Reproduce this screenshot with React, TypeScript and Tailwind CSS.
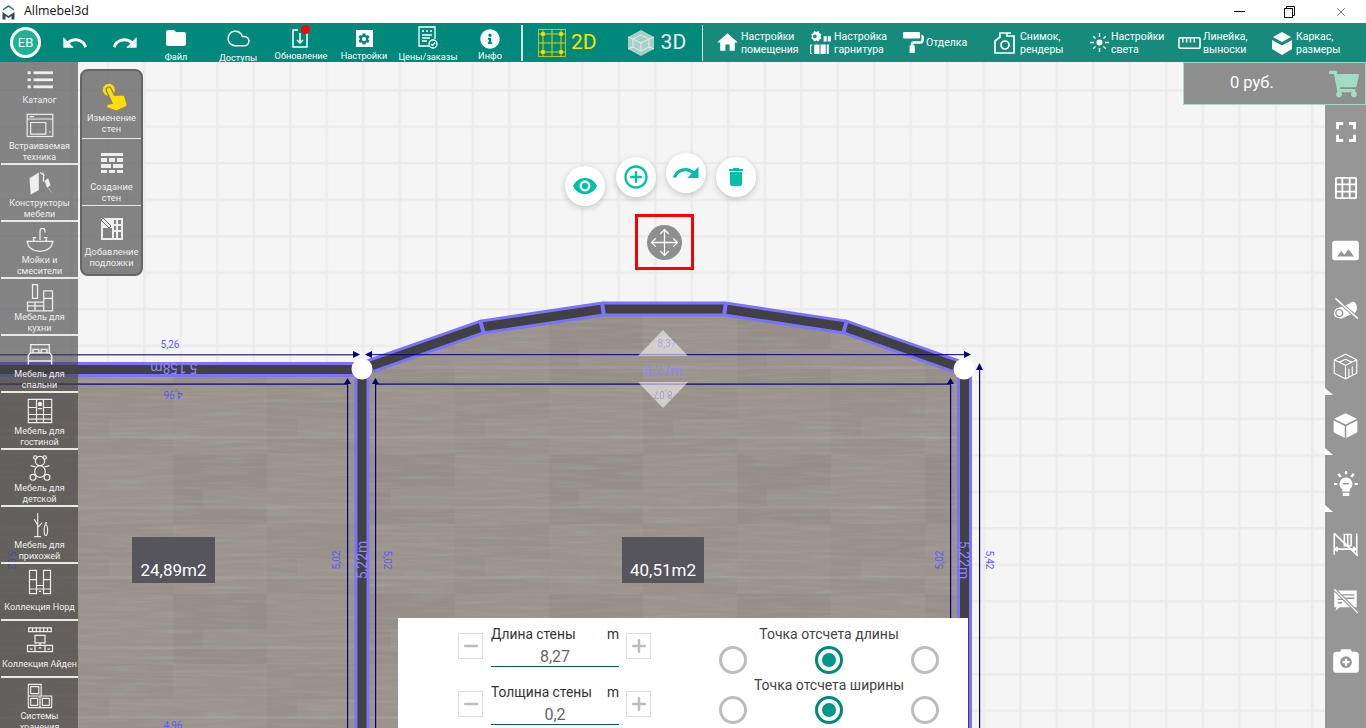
import React from "react";
import { FaInfoCircle, FaPaintRoller, FaShoppingCart } from "react-icons/fa";
import {
	MdAddCircleOutline,
	MdDelete,
	MdFolder,
	MdFullscreen,
	MdHome,
	MdPanorama,
	MdRedo,
	MdSettings,
	MdTouchApp,
	MdUndo,
	MdVisibility,
} from "react-icons/md";
import { Cloud, Minus, Move, Plus, X } from "lucide-react";

type IconProps = { children: React.ReactNode; size?: number; box?: string; sw?: number };

function Line({ children, size = 26, box = "0 0 24 24", sw = 1 }: IconProps) {
	return (
		<svg width={size} height={size} viewBox={box} fill="none" stroke="currentColor" strokeWidth={sw}>
			{children}
		</svg>
	);
}

function Solid({ children, size = 26, box = "0 0 24 24" }: IconProps) {
	return (
		<svg width={size} height={size} viewBox={box} fill="currentColor">
			{children}
		</svg>
	);
}

function ToolButton({ icon, label }: { icon: React.ReactNode; label: string }) {
	return (
		<div className="flex h-full w-[62px] shrink-0 flex-col items-center text-white">
			<div className="flex h-[26px] items-end justify-center pb-[1px]">{icon}</div>
			<span className="whitespace-nowrap text-[9.2px] leading-[12px]">{label}</span>
		</div>
	);
}

function SettingButton({
	icon,
	lines,
	className,
}: {
	icon: React.ReactNode;
	lines: string[];
	className: string;
}) {
	return (
		<div className={`flex shrink-0 items-center text-white ${className}`}>
			{icon}
			<div className="whitespace-nowrap text-[10.5px] leading-[13px]">
				{lines.map((l) => (
					<div key={l}>{l}</div>
				))}
			</div>
		</div>
	);
}

const catalogItems: { label: string[]; single?: boolean; h?: string; noLine?: boolean; icon: React.ReactNode }[] = [
	{
		label: ["Каталог"],
		h: "h-[46px]",
		noLine: true,
		icon: (
			<Solid size={26}>
				<rect x="0.5" y="4" width="3" height="2.6" />
				<rect x="0.5" y="10.5" width="3" height="2.6" />
				<rect x="0.5" y="17" width="3" height="2.6" />
				<rect x="6" y="4" width="18" height="2.6" />
				<rect x="6" y="10.5" width="18" height="2.6" />
				<rect x="6" y="17" width="18" height="2.6" />
			</Solid>
		),
	},
	{
		label: ["Встраиваемая", "техника"],
		icon: (
			<Line size={28}>
				<rect x="1" y="2" width="22" height="19" />
				<path d="M1 6h22M3 4h4M4 9h13v10H4zM20 17h1" />
			</Line>
		),
	},
	{
		label: ["Конструкторы", "мебели"],
		icon: (
			<Solid size={28}>
				<path d="M3 8l8-5v15l-7 4z" />
				<path d="M12 3l3 2v6" fill="none" stroke="currentColor" />
				<path d="M16 10l3-2 2 6-3 2z" />
				<path d="M14 2l2 4M19 16l3 4" fill="none" stroke="currentColor" strokeWidth="0.5" />
			</Solid>
		),
	},
	{
		label: ["Мойки и", "смесители"],
		icon: (
			<Line size={30}>
				<path d="M2 13h20c0 5-4 8-10 8S2 18 2 13zM1 13h22M12 12V5c0-3 4-3 4 0v1M6 10h3M15 10h3M7 10v3M17 10v3" />
			</Line>
		),
	},
	{
		label: ["Мебель для", "кухни"],
		icon: (
			<Line size={30}>
				<path d="M6 2h4v11H6zM15 7h7v16h-7zM15 13h7M2 16h13v7H2zM2 19h13M8 16v7" />
			</Line>
		),
	},
	{
		label: ["Мебель для", "спальни"],
		icon: (
			<Line size={28} sw={1.2}>
				<path d="M4 11V4h16v7M2 18v-5l2-2h16l2 2v5zM2 18v3M22 18v3M6 11V8h5v3M13 11V8h5v3" />
			</Line>
		),
	},
	{
		label: ["Мебель для", "гостиной"],
		icon: (
			<Line size={28}>
				<path d="M2 2h20v20H2zM9 2v20M15 2v20M2 9h7M15 9h7M2 15h20M2 19h20M10 10h4" />
				<circle cx="12" cy="6" r="1.5" fill="currentColor" />
			</Line>
		),
	},
	{
		label: ["Мебель для", "детской"],
		icon: (
			<Line size={28}>
				<circle cx="12" cy="6" r="4" />
				<circle cx="8" cy="3" r="1.5" />
				<circle cx="16" cy="3" r="1.5" />
				<ellipse cx="12" cy="15" rx="4.5" ry="5" />
				<circle cx="6" cy="20" r="2.5" />
				<circle cx="18" cy="20" r="2.5" />
				<path d="M8 11l-4-1M16 11l4-1" />
			</Line>
		),
	},
	{
		label: ["Мебель для", "прихожей"],
		icon: (
			<Line size={28}>
				<path d="M10 2v20M7 22h6M7 7l3 5M10 14l4-4M17 12c-2 0-2 9 0 9s2-9 0-9zM17 12v-2h1" />
			</Line>
		),
	},
	{
		label: ["Коллекция Норд"],
		single: true,
		icon: (
			<Line size={28}>
				<path d="M3 2h6v20H3zM15 2h6v20h-6zM9 15h6M9 18h6M3 10h6M15 10h6M3 18h6M15 18h6M11 20h2" />
			</Line>
		),
	},
	{
		label: ["Коллекция Айден"],
		single: true,
		icon: (
			<Line size={30}>
				<path d="M3 3h18v3H3zM6 3v3M9 3v3M12 3v3M15 3v3M18 3v3M8 9h8v6H8zM12 15v2M2 17h20v5H2zM8 17v5M16 17v5M11 19h2M4 20h2M18 20h2" />
			</Line>
		),
	},
	{
		label: ["Системы", "хранения"],
		icon: (
			<Line size={28}>
				<path d="M2 2h11v10H2zM4 4h7v6H4zM2 12h10v10H2zM4 14h6v6H4zM12 12h10v10H12zM14 14h6v6h-6z" />
			</Line>
		),
	},
];

const sideTools: { lines: string[]; icon: React.ReactNode; h: string; iconH: string }[] = [
	{
		lines: ["Изменение", "стен"],
		h: "h-[68px]",
		iconH: "h-[41px]",
		icon: <MdTouchApp size={32} className="rotate-[-25deg] text-[#ffdf00]" />,
	},
	{
		lines: ["Создание", "стен"],
		h: "h-[67px]",
		iconH: "h-[42px]",
		icon: (
			<Solid size={24}>
				<path d="M1 2h22v3H1zM1 7h6v4H1zM9 7h6v4H9zM17 7h6v4h-6zM1 13h10v4H1zM13 13h10v4H13zM1 19h6v3H1zM9 19h6v3H9zM17 19h6v3h-6z" />
			</Solid>
		),
	},
	{
		lines: ["Добавление", "подложки"],
		h: "h-[66px]",
		iconH: "h-[40px]",
		icon: (
			<Solid size={24}>
				<path d="M1 1h22v22H1zM3 11v10h9V11zM14 3v4h2V3zM18 3v4h3V3zM14 9v4h2V9zM18 9v4h3V9zM14 15v6h2v-6zM18 15v6h3v-6z" fillRule="evenodd" />
				<path d="M3 1l8 8-2 2-8-8z" stroke="#6a6a6a" strokeWidth="1" />
			</Solid>
		),
	},
];

const railItems: { h: string; icon: React.ReactNode }[] = [
	{ h: "h-[54px]", icon: <MdFullscreen size={34} /> },
	{
		h: "h-[58px]",
		icon: (
			<Solid size={22}>
				<path
					fillRule="evenodd"
					d="M2 0h20a2 2 0 012 2v20a2 2 0 01-2 2H2a2 2 0 01-2-2V2a2 2 0 012-2zM2 2v5h5V2zM9 2v5h6V2zM17 2v5h5V2zM2 9v6h5V9zM9 9v6h6V9zM17 9v6h5V9zM2 17v5h5v-5zM9 17v5h6v-5zM17 17v5h5v-5z"
				/>
			</Solid>
		),
	},
	{ h: "h-[66px]", icon: <MdPanorama size={29} /> },
	{
		h: "h-[50px]",
		icon: (
			<Line size={27}>
				<path d="M8 21l12-5c3-1 3-9-1-10-2 0-3 1-4 2L4 12c-3 2-3 7 0 8z" fill="currentColor" stroke="none" />
				<path d="M3 3l20 18" stroke="#969696" strokeWidth="3" />
				<path d="M3 3l20 18" strokeWidth="1.2" />
				<circle cx="6.5" cy="16" r="3" stroke="#969696" strokeWidth="1.2" />
			</Line>
		),
	},
	{
		h: "h-[66px]",
		icon: (
			<Line size={27}>
				<path d="M12 1l10 5v12l-10 5-10-5V6zM2 6l10 5 10-5M12 11v12M6 8.500l6-3 6 3M15 21v-7M18 19v-7" />
			</Line>
		),
	},
	{
		h: "h-[52px]",
		icon: (
			<Solid size={27}>
				<path d="M12 1l10 5-10 5L2 6zM1.500 7.500L11.300 12.500V23L1.500 18zM22.500 7.500L12.700 12.500V23l9.800-5z" />
			</Solid>
		),
	},
	{
		h: "h-[66px]",
		icon: (
			<Solid size={26}>
				<path d="M12 6a6 6 0 00-3.500 10.800V19h7v-2.200A6 6 0 0012 6zM9 20h6v3H9z" />
				<path d="M11 0h2v3h-2zM1 11h3v2H1zM20 11h3v2h-3zM4 3l2-1 2 3-2 1zM20 3l-2-1-2 3 2 1z" />
				<path d="M9 11h6c0 2-6 2-6 0z" fill="#969696" />
			</Solid>
		),
	},
	{
		h: "h-[52px]",
		icon: (
			<Line size={27} sw={1.4}>
				<path d="M2 3v19M22 3v19M2 17h20M5 15l-2 2 2 2M19 15l2 2-2 2M11 4h6v10h-6zM14 4v10" />
				<path d="M2 3l21 20" strokeWidth="1.4" />
			</Line>
		),
	},
	{
		h: "h-[62px]",
		icon: (
			<Solid size={27}>
				<path d="M2 3h20v15H7l-4 3 1-3H2z" />
				<path d="M8 7h12M8 10h12M5 11h5M5 14h4" stroke="#969696" strokeWidth="1.200" />
				<path d="M2 2l21 21" stroke="#969696" strokeWidth="3" />
				<path d="M2 2l21 21" stroke="currentColor" strokeWidth="1.200" />
			</Solid>
		),
	},
	{
		h: "h-[60px]",
		icon: (
			<Solid size={28}>
				<path d="M4 4h3l1-2h8l1 2h3a3 3 0 013 3v13a2 2 0 01-2 2H3a2 2 0 01-2-2V7a3 3 0 013-3z" />
				<circle cx="12" cy="13" r="5" fill="#969696" />
				<path d="M11 10h2v2h2v2h-2v2h-2v-2H9v-2h2z" />
			</Solid>
		),
	},
];

const wallPoints = "362,369 482,327 603,309 725,309 845,327 964,369";

function Plan() {
	const blue = "#5a5aff";
	const navy = "#000080";
	const lav = "#7b72ff";
	return (
		<svg className="block h-full w-full" viewBox="0 62 1366 666">
			<defs>
				<pattern id="grid" x="363" y="163" width="36.5" height="36.5" patternUnits="userSpaceOnUse">
					<rect x="-1" y="0" width="2.500" height="36.5" fill="#ececec" />
					<rect x="0" y="-1" width="36.5" height="2.500" fill="#ececec" />
					<rect x="35.500" y="0" width="1" height="36.5" fill="#ececec" />
					<rect x="0" y="35.500" width="36.5" height="1" fill="#ececec" />
				</pattern>
				<pattern id="tiles" x="79" y="384" width="188" height="140" patternUnits="userSpaceOnUse">
					<rect x="0" y="0" width="94" height="70" fill="#000" opacity="0.02" />
					<rect x="94" y="70" width="94" height="70" fill="#000" opacity="0.03" />
					<rect x="30" y="35" width="64" height="18" fill="#fff" opacity="0.04" />
					<rect x="124" y="105" width="64" height="18" fill="#fff" opacity="0.04" />
					<rect x="0" y="52" width="188" height="3" fill="#fff" opacity="0.07" />
					<rect x="0" y="122" width="188" height="3" fill="#fff" opacity="0.06" />
				</pattern>
				<filter id="grain" x="0" y="0" width="100%" height="100%">
					<feTurbulence type="fractalNoise" baseFrequency="0.02 0.3" numOctaves="3" seed="7" />
					<feColorMatrix values="0 0 0 0 0.38  0 0 0 0 0.36  0 0 0 0 0.33  0 0 0 1.300 -0.560" />
				</filter>
				<clipPath id="floorClip">
					<polygon points={`0,369 ${wallPoints} 964,728 0,728`} />
				</clipPath>
			</defs>

			<rect x="0" y="62" width="1366" height="666" fill="#f5f5f5" />
			<rect x="0" y="62" width="1366" height="666" fill="url(#grid)" />

			<g clipPath="url(#floorClip)">
				<rect x="0" y="300" width="970" height="428" fill="#9b948c" />
				<rect x="0" y="300" width="970" height="428" filter="url(#grain)" />
				<rect x="0" y="300" width="970" height="428" fill="url(#tiles)" />
			</g>

			<path d="M372 360Q665 247 954 360" fill="none" stroke="#3f3f42" strokeWidth="2" />
			<polyline points={wallPoints} fill="none" stroke={lav} strokeWidth="15" />
			<polyline points={wallPoints} fill="none" stroke="#414144" strokeWidth="9" />
			{[
				"480,320 484,334",
				"602,302 604,316",
				"726,302 724,316",
				"847,320 843,334",
			].map((p) => (
				<polyline key={p} points={p} stroke={lav} strokeWidth="4" fill="none" />
			))}

			<rect x="0" y="362" width="362" height="15" fill={lav} />
			<rect x="0" y="365" width="362" height="9" fill="#414144" />
			<rect x="354.500" y="369" width="15" height="359" fill={lav} />
			<rect x="357.500" y="369" width="9" height="359" fill="#414144" />
			<rect x="957" y="369" width="15" height="359" fill={lav} />
			<rect x="960" y="369" width="9" height="359" fill="#414144" />

			<rect x="0" y="354" width="358" height="1.500" fill="#4c4c8c" />
			<rect x="366" y="354" width="602" height="1.200" fill={navy} opacity="0.85" />
			<rect x="0" y="383.500" width="348" height="1.200" fill={navy} />
			<rect x="375" y="383.500" width="576" height="1.200" fill={navy} />
			<rect x="347" y="384" width="1.200" height="344" fill={navy} />
			<rect x="375" y="384" width="1.200" height="344" fill={navy} />
			<rect x="950" y="384" width="1.200" height="344" fill={navy} />
			<rect x="979" y="368" width="1.200" height="360" fill={navy} />
			<g fill={navy}>
				<polygon points="353,351 360,354.500 353,358" />
				<polygon points="372,351 365,354.500 372,358" />
				<polygon points="964,351 971,354.500 964,358" />
				<polygon points="347.500,378 344,384 351,384" />
				<polygon points="375.500,378 372,384 379,384" />
				<polygon points="950.500,378 947,384 954,384" />
				<polygon points="979.500,363 976,370 983,370" />
			</g>

			<circle cx="362" cy="369" r="10.500" fill="#fff" />
			<circle cx="964" cy="369" r="10.500" fill="#fff" />

			<polygon points="663,330 688,356 638,356" fill="#fff" opacity="0.55" />
			<polygon points="663,408 688,382 638,382" fill="#fff" opacity="0.55" />

			<g fill={blue} fontSize="10" textAnchor="middle">
				<text x="170" y="348">5,26</text>
				<text transform="translate(173 391) rotate(180)">4,96</text>
				<text x="173" y="729">4,96</text>
				<text transform="translate(340 560) rotate(-90)">5,02</text>
				<text transform="translate(384 560) rotate(90)">5,02</text>
				<text transform="translate(943 560) rotate(-90)">5,02</text>
				<text transform="translate(986 560) rotate(90)">5,42</text>
				<text transform="translate(8 560) rotate(90)">5,02</text>
				<text x="667" y="347" opacity="0.35">8,37</text>
				<text transform="translate(663 391) rotate(180)" opacity="0.4">8,07</text>
			</g>
			<g fill="#8f86ff" fontSize="14" textAnchor="middle">
				<text transform="translate(174 363) rotate(180)">5.158m</text>
				<text x="663" y="376">8,27m</text>
				<text transform="translate(367 560) rotate(-90)">5,22m</text>
				<text transform="translate(959 560) rotate(90)">5,22m</text>
			</g>
		</svg>
	);
}

function Radio({ on }: { on?: boolean }) {
	return (
		<div
			className={`flex h-7 w-7 items-center justify-center rounded-full border-[3px] ${
				on ? "border-[#00897b]" : "border-[#bdbdbd]"
			}`}
		>
			{on && <div className="h-[14px] w-[14px] rounded-full bg-[#009688]" />}
		</div>
	);
}

function WallField({ label, value }: { label: string; value: string }) {
	return (
		<div className="flex h-[41px] items-center">
			<div className="flex h-[26px] w-[25px] items-center justify-center border border-[#dddddd] text-[#bdbdbd]">
				<Minus size={20} strokeWidth={3} />
			</div>
			<div className="ml-[8px] w-[128px]">
				<div className="flex h-[19px] items-center justify-between text-[13.8px] text-[#333333]">
					<span>{label}</span>
					<span>m</span>
				</div>
				<div className="h-[23px] border-b border-[#00604f] text-center text-[16px] leading-[26px] text-[#666666]">
					{value}
				</div>
			</div>
			<div className="ml-[7px] flex h-[26px] w-[25px] items-center justify-center border border-[#dddddd] text-[#bdbdbd]">
				<Plus size={20} strokeWidth={3} />
			</div>
		</div>
	);
}

function FloatButton({ children, className }: { children: React.ReactNode; className: string }) {
	return (
		<div
			className={`absolute flex h-10 w-10 items-center justify-center rounded-full bg-white text-[#00bfa5] shadow-[0_2px_6px_rgba(0,0,0,0.2)] ${className}`}
		>
			{children}
		</div>
	);
}

export default function App() {
	return (
		<div className="relative flex h-[728px] w-[1366px] flex-col overflow-hidden bg-white font-['Roboto',sans-serif]">
			{/* title bar */}
			<div className="flex h-[23px] shrink-0 items-center bg-white">
				<svg className="ml-[2px]" width="13" height="16" viewBox="0 0 13 16">
					<path d="M1 5l5.500-4L12 5v1.500L6.500 3 1 6.500z" fill="#1b7f73" />
					<path d="M0.500 8l6 4 6-4v7.500h-3V12l-3 2-3-2v3.500h-3z" fill="#37474f" />
				</svg>
				<span className="ml-[9px] font-['Open_Sans',sans-serif] text-[12.4px] text-[#111111]">Allmebel3d</span>
				<div className="ml-auto flex items-center">
					<div className="h-px w-[11px] bg-black" />
					<svg className="ml-[39px]" width="11" height="12" viewBox="0 0 11 12" fill="none" stroke="#111">
						<rect x="0.500" y="2.500" width="8" height="9" />
						<path d="M2.500 2.500v-2h8v9h-2" />
					</svg>
					<X className="ml-[39px] mr-[18px] text-[#111111]" size={14} strokeWidth={1} />
				</div>
			</div>

			{/* toolbar */}
			<div className="flex h-[39px] shrink-0 bg-[#00897b]">
				<div className="flex h-full w-[702px] shrink-0 items-center">
					<div className="ml-[10px] flex h-[31px] w-[31px] shrink-0 items-center justify-center rounded-full border-[3px] border-white bg-[#1ab394] text-[13px] text-white">
						EB
					</div>
					<MdUndo className="ml-[20px] shrink-0 text-white" size={28} />
					<MdRedo className="ml-[22px] shrink-0 text-white" size={28} />
					<div className="ml-[6px] flex h-full pt-[3px]">
						<ToolButton icon={<MdFolder size={24} />} label="Файл" />
						<ToolButton icon={<Cloud size={25} strokeWidth={1.500} />} label="Доступы" />
						<div className="relative ml-[1px]">
							<ToolButton
								icon={
									<Line size={22} box="0 0 22 22" sw={1.500}>
										<path d="M8 3H3v17h14V3h-2M10 6v10M7 13l3 3 3-3" />
									</Line>
								}
								label="Обновление"
							/>
							<span className="absolute left-[31px] top-[-1px] h-[9px] w-[9px] rounded-full bg-[#ff0000]" />
						</div>
						<div className="ml-[1px]">
							<ToolButton
								icon={
									<span className="mb-[2px] flex h-[17px] w-[17px] items-center justify-center bg-white text-[#00897b]">
										<MdSettings size={14} />
									</span>
								}
								label="Настройки"
							/>
						</div>
						<div className="ml-[2px]">
							<ToolButton
								icon={
									<Line size={24} box="0 0 22 24" sw={1.300}>
										<path d="M12 20H2V1h16v12M5 5h2M9 5h2M13 5h2M5 9h10M5 12h8M5 15h5" />
										<circle cx="16" cy="18" r="4" />
										<path d="M14 18l1.500 1.500 2.500-3" />
									</Line>
								}
								label="Цены/заказы"
							/>
						</div>
						<ToolButton icon={<FaInfoCircle size={20} />} label="Инфо" />
					</div>
					<div className="mt-[1px] h-[36px] w-[2px] shrink-0 bg-[#cfe6e2]" />
					<svg className="ml-[15px] shrink-0" width="28" height="28" viewBox="0 0 28 28" fill="none" stroke="#e6d300">
						<rect x="0.500" y="0.500" width="27" height="27" strokeWidth="0.800" />
						<path d="M0 5h28M0 14h28M0 23h28M5 0v28M14 0v28M23 0v28" strokeWidth="1" />
						<path d="M3.500 3.500h3v3h-3zM21.500 3.500h3v3h-3zM3.500 21.500h3v3h-3zM21.500 21.500h3v3h-3z" fill="#ffe000" />
					</svg>
					<span className="ml-[5px] text-[21px] text-[#ffe000]">2D</span>
					<svg className="ml-[30px] shrink-0" width="28" height="28" viewBox="0 0 28 28">
						<path d="M14 1l13 7v12l-13 7-13-7V8z" fill="#a8cfc8" />
						<path d="M14 6l8 4v8l-8 4-8-4v-8zM6 10l8 4 8-4M14 14v8M1 8l5 2M27 8l-5 2M1 20l5-2M27 20l-5-2" fill="none" stroke="#e4f0ee" />
					</svg>
					<span className="ml-[6px] text-[21px] text-[#e8f3f1]">3D</span>
				</div>
				<div className="flex min-w-0 flex-1 items-center bg-[#178b7b]">
					<div className="mt-[1px] h-[36px] w-px shrink-0 bg-[#cfe6e2]" />
					<SettingButton
						className="ml-[12px] w-[93px] gap-[1px]"
						icon={<MdHome size={25} />}
						lines={["Настройки", "помещения"]}
					/>
					<SettingButton
						className="w-[95px] gap-[1px]"
						icon={
							<Solid size={25}>
								<path d="M7 1l1 1 2-1 1 2 2 1-1 2 1 2-2 1-1 2-2-1-2 1-1-2-2-1 1-2-1-2 2-1 1-2 2 1z" />
								<circle cx="6.500" cy="6" r="1.800" fill="#178b7b" />
								<path d="M15 6h3v5h-3zM19 6h3v5h-3zM6 14h5v9H6zM12 14h5v9h-5zM18 14h2v9h-2zM2 14h2v1H3v7h1v1H2z" />
							</Solid>
						}
						lines={["Настройка", "гарнитура"]}
					/>
					<SettingButton
						className="w-[90px] gap-[2px]"
						icon={<FaPaintRoller size={21} />}
						lines={["Отделка"]}
					/>
					<SettingButton
						className="w-[97px] gap-[3px]"
						icon={
							<Line size={24} sw={1.700}>
								<path d="M2 22V10l5-4V2h7v3h7v17zM14 2h4" />
								<circle cx="12" cy="14" r="4" />
							</Line>
						}
						lines={["Снимок,", "рендеры"]}
					/>
					<SettingButton
						className="w-[88px] gap-[2px]"
						icon={
							<Line size={19} sw={1.700}>
								<circle cx="12" cy="12" r="3" fill="currentColor" />
								<path d="M12 0v5M12 19v5M0 12h5M19 12h5M4 4l3 3M20 4l-3 3M4 20l3-3M20 20l-3-3" />
							</Line>
						}
						lines={["Настройки", "света"]}
					/>
					<SettingButton
						className="w-[92px] gap-[2px]"
						icon={
							<Line size={23} sw={1.600}>
								<rect x="1" y="7" width="22" height="11" rx="1" />
								<path d="M5 7v5M9 7v5M13 7v5M17 7v5" />
							</Line>
						}
						lines={["Линейка,", "выноски"]}
					/>
					<SettingButton
						className="gap-[2px]"
						icon={
							<Solid size={24}>
								<path d="M12 1l9 5-9 5-9-5zM2 9l10 5.500L22 9v9l-10 6-10-6z" />
							</Solid>
						}
						lines={["Каркас,", "размеры"]}
					/>
				</div>
			</div>

			{/* canvas */}
			<div className="relative min-h-0 flex-1">
				<Plan />

				{/* area labels */}
				<div className="absolute left-[132px] top-[475px] flex h-[46px] w-[83px] items-end justify-center bg-[#55555b] text-[17px] text-white">
					24,89m2
				</div>
				<div className="absolute left-[622px] top-[475px] flex h-[46px] w-[82px] items-end justify-center bg-[#55555b] text-[17px] text-white">
					40,51m2
				</div>

				{/* catalog */}
				<div className="absolute left-0 top-0 h-[666px] w-[78px] overflow-hidden bg-[#434343]/[0.63] text-[#eeeeee]">
					{catalogItems.map((item) => (
						<div
							key={item.label[0]}
							className={`ml-[1px] flex shrink-0 flex-col items-center pt-[3px] ${item.h ?? "h-[57px]"} ${
								item.noLine ? "" : "border-b-2 border-[#e8e8e8]"
							}`}
						>
							<div className="flex h-[30px] items-center justify-center">{item.icon}</div>
							<div
								className={`whitespace-nowrap text-center text-[9px] leading-[11px] ${item.single ? "mt-[5px]" : ""}`}
							>
								{item.label.map((l) => (
									<div key={l}>{l}</div>
								))}
							</div>
						</div>
					))}
				</div>

				{/* wall tools */}
				<div className="absolute left-[80px] top-[7px] h-[207px] w-[63px] rounded-lg border-2 border-[#666666] bg-[#6e6e6e]/85 text-[#eeeeee]">
					{sideTools.map((t, i) => (
						<div
							key={t.lines[0]}
							className={`flex flex-col items-center ${t.h} ${i < 2 ? "border-b border-[#e8e8e8]" : ""}`}
						>
							<div className={`flex items-center justify-center pt-[6px] ${t.iconH}`}>{t.icon}</div>
							<div className="whitespace-nowrap text-center text-[9.3px] leading-[11px]">
								{t.lines.map((l) => (
									<div key={l}>{l}</div>
								))}
							</div>
						</div>
					))}
				</div>

				{/* price */}
				<div className="absolute right-0 top-0 flex h-[43px] w-[183px] items-center border border-[#a3dcc4] bg-[#8e8e8e]">
					<span className="ml-[46px] text-[16.5px] text-white">0 руб.</span>
					<FaShoppingCart className="ml-auto mr-[6px] text-[#a3dcc4]" size={30} />
				</div>

				{/* right rail */}
				<div className="absolute bottom-0 right-0 top-[43px] flex w-[41px] flex-col items-center bg-[#969696] text-white">
					{railItems.map((r, i) => (
						<div key={i} className={`flex shrink-0 items-center justify-center ${r.h}`}>
							{r.icon}
						</div>
					))}
					<span className="absolute left-0 top-[283px] h-0 w-0 border-l-[8px] border-t-[7px] border-l-white border-t-transparent" />
					<span className="absolute left-0 top-[343px] h-0 w-0 border-l-[8px] border-t-[7px] border-l-white border-t-transparent" />
					<span className="absolute left-0 top-[400px] h-0 w-0 border-l-[8px] border-t-[7px] border-l-white border-t-transparent" />
				</div>

				{/* wall actions */}
				<FloatButton className="left-[565px] top-[104px]">
					<MdVisibility size={26} />
				</FloatButton>
				<FloatButton className="left-[616px] top-[95px]">
					<MdAddCircleOutline size={28} />
				</FloatButton>
				<FloatButton className="left-[666px] top-[91px]">
					<MdRedo size={30} />
				</FloatButton>
				<FloatButton className="left-[716px] top-[95px]">
					<MdDelete size={24} />
				</FloatButton>

				<div className="absolute left-[635px] top-[152px] flex h-[56px] w-[59px] items-center justify-center border-[3px] border-[#ff0000]">
					<div className="flex h-[35px] w-[35px] items-center justify-center rounded-full bg-[#8f8f8f] text-white">
						<Move size={31} strokeWidth={1} />
					</div>
				</div>

				{/* wall settings */}
				<div className="absolute left-[398px] top-[556px] flex h-[110px] w-[570px] overflow-hidden bg-white">
					<div className="ml-[60px] flex w-[193px] shrink-0 flex-col gap-[17px] pt-[7px]">
						<WallField label="Длина стены" value="8,27" />
						<WallField label="Толщина стены" value="0,2" />
					</div>
					<div className="ml-[68px] flex w-[220px] shrink-0 flex-col pt-[7px] text-center text-[14px] leading-[18px] text-[#444444]">
						<div className="whitespace-nowrap">Точка отсчета длины</div>
						<div className="mt-[3px] flex justify-between">
							<Radio />
							<Radio on />
							<Radio />
						</div>
						<div className="mt-[2px] whitespace-nowrap">Точка отсчета ширины</div>
						<div className="mt-[2px] flex justify-between">
							<Radio />
							<Radio on />
							<Radio />
						</div>
					</div>
				</div>
			</div>
		</div>
	);
}
